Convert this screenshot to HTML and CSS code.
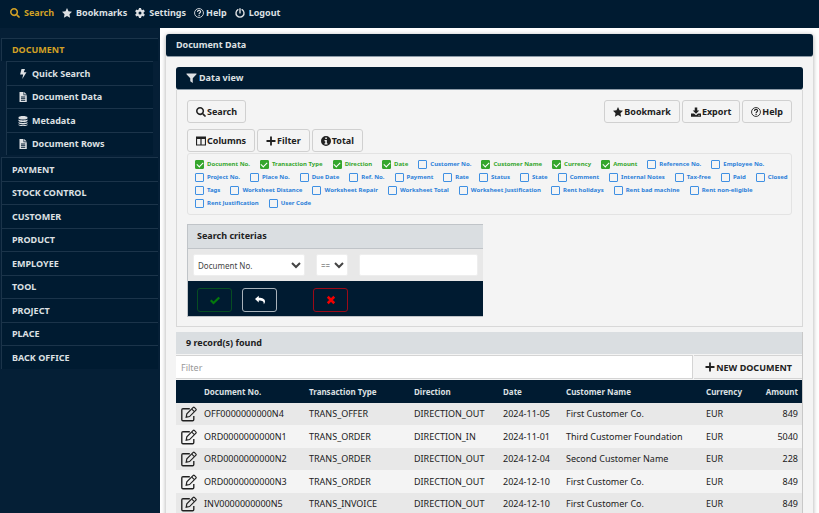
FILE: index.html
```html
<!DOCTYPE html>
<html lang="en">
<head>
    <meta charset="UTF-8">
    <meta name="viewport" content="width=device-width, initial-scale=1.0">
    <title>Document Data</title>
    <link rel="stylesheet" href="styles.css">
</head>
<body>
    <svg class="sprite" aria-hidden="true">
        <symbol id="search" viewBox="0 0 512 512"><path d="M505 442.7L405.3 343c-4.5-4.5-10.6-7-17-7H372c27.6-35.3 44-79.7 44-128C416 93.1 322.9 0 208 0S0 93.1 0 208s93.1 208 208 208c48.3 0 92.7-16.4 128-44v16.3c0 6.4 2.5 12.5 7 17l99.7 99.7c9.4 9.4 24.6 9.4 33.9 0l28.3-28.3c9.4-9.4 9.4-24.6.1-34zM208 336c-70.7 0-128-57.2-128-128s57.2-128 128-128 128 57.2 128 128-57.200 128-128 128z"/></symbol>
        <symbol id="star" viewBox="0 0 20 20"><path d="M10 0l3 6.500 7 .9-5.100 4.900 1.300 7.200L10 16l-6.200 3.500 1.300-7.200L0 7.400l7-.9z"/></symbol>
        <symbol id="cog" viewBox="0 0 20 20"><circle cx="10" cy="10" r="5.200" fill="none" stroke="currentColor" stroke-width="4.400"/><path d="M10 0v4M10 16v4M1.400 5l3.400 2M15.200 13l3.400 2M1.400 15l3.400-2M15.200 7l3.400-2" stroke="currentColor" stroke-width="4.400"/></symbol>
        <symbol id="help" viewBox="0 0 20 20"><circle cx="10" cy="10" r="8.900" fill="none" stroke="currentColor" stroke-width="1.800"/><path d="M7 8c0-4.200 6.200-4.200 6.200-.6 0 2.200-3 2.200-3 4.800" fill="none" stroke="currentColor" stroke-width="2.200"/><path d="M9 13.600h2.400V16H9z"/></symbol>
        <symbol id="power" viewBox="0 0 20 20"><path d="M5.800 3.400a8 8 0 1 0 8.400 0M10 1.400v8.400" fill="none" stroke="currentColor" stroke-width="2.800" stroke-linecap="round"/></symbol>
        <symbol id="bolt" viewBox="0 0 20 20"><path d="M7 0h7l-2.500 6.500H17L8.500 20l1.800-9H4.200z"/></symbol>
        <symbol id="file" viewBox="0 0 20 20"><path fill-rule="evenodd" d="M3 0h8v6.500h6.500V20H3zM12.300 0l5.200 5.200h-5.200zM6 9v1.800h8.500V9zm0 3.300v1.800h8.500v-1.800zm0 3.300v1.800h8.500v-1.800z"/></symbol>
        <symbol id="database" viewBox="0 0 20 20"><path d="M1 3c0-4 18-4 18 0v1.500c0 3.600-18 3.600-18 0zM1 7c3 2.400 15 2.400 18 0v2.500c0 3.400-18 3.400-18 0zM1 12c3 2.400 15 2.400 18 0v2.200c0 3.400-18 3.400-18 0zM1 16.600c3 2.400 15 2.400 18 0V18c0 3-18 3-18 0z"/></symbol>
        <symbol id="filter" viewBox="0 0 20 20"><path d="M0 1h20v1.500l-7.500 8V20l-5-3.500v-6L0 2.500z"/></symbol>
        <symbol id="columns" viewBox="0 0 20 20"><path fill-rule="evenodd" d="M0 1h20v18H0zM2.200 6v10.800h6.600V6zm9 0v10.800h6.600V6z"/></symbol>
        <symbol id="plus" viewBox="0 0 20 20"><path d="M8.200 1h3.600v7.200H19v3.600h-7.200V19H8.200v-7.200H1V8.200h7.200z"/></symbol>
        <symbol id="info" viewBox="0 0 20 20"><path fill-rule="evenodd" d="M10 0a10 10 0 1 0 0 20 10 10 0 0 0 0-20zM8.500 3h3.200v3H8.500zM7 8h4.700v6.500H13V17H7v-2.500h1.500v-4H7z"/></symbol>
        <symbol id="download" viewBox="0 0 20 20"><path fill-rule="evenodd" d="M7.500 1h5v6h4L10 13.500 3.500 7h4zM0 13h6l4 3.400 4-3.400h6v6.500H0zM15 16.200v1.300h2v-1.300z"/></symbol>
        <symbol id="edit" viewBox="0 0 20 20"><path d="M11 3.500H2.500q-1.500 0-1.500 1.500v12q0 1.500 1.500 1.500h12q1.500 0 1.500-1.500v-4.500" fill="none" stroke="currentColor" stroke-width="1.700"/><path d="M6.500 14l.8-4.200 8-8q.7-.6 1.400 0l2 2q.6.700 0 1.400l-8 8z" fill="none" stroke="currentColor" stroke-width="1.500"/><path d="M13.500 3.800l3.200 3.200" stroke="currentColor" stroke-width="1.300"/></symbol>
        <symbol id="check" viewBox="0 0 20 20"><path d="M1.500 10.500l5.500 5.500L18.500 5" fill="none" stroke="currentColor" stroke-width="4.400"/></symbol>
        <symbol id="reply" viewBox="0 0 20 20"><path d="M0 8l7.500-6.500V5.500C15 5.500 20 8 20 13q0 3-2.500 5.500c.5-5.500-2.500-7.500-10-7.500v4z"/></symbol>
        <symbol id="times" viewBox="0 0 20 20"><path d="M3.500 3.500l13 13M16.500 3.500l-13 13" stroke="currentColor" stroke-width="5"/></symbol>
    </svg>

    <header class="menubar">
        <a href="#" class="active"><svg class="icon"><use href="#search"/></svg>Search</a>
        <a href="#"><svg class="icon"><use href="#star"/></svg>Bookmarks</a>
        <a href="#"><svg class="icon"><use href="#cog"/></svg>Settings</a>
        <a href="#" class="tight"><svg class="icon"><use href="#help"/></svg>Help</a>
        <a href="#"><svg class="icon"><use href="#power"/></svg>Logout</a>
    </header>

    <div class="page">
        <nav class="sidebar">
            <a href="#" class="group active">DOCUMENT</a>
            <div class="submenu">
                <a href="#"><svg class="icon"><use href="#bolt"/></svg>Quick Search</a>
                <a href="#"><svg class="icon"><use href="#file"/></svg>Document Data</a>
                <a href="#"><svg class="icon"><use href="#database"/></svg>Metadata</a>
                <a href="#"><svg class="icon"><use href="#file"/></svg>Document Rows</a>
            </div>
            <a href="#" class="group">PAYMENT</a>
            <a href="#" class="group">STOCK CONTROL</a>
            <a href="#" class="group">CUSTOMER</a>
            <a href="#" class="group">PRODUCT</a>
            <a href="#" class="group">EMPLOYEE</a>
            <a href="#" class="group">TOOL</a>
            <a href="#" class="group">PROJECT</a>
            <a href="#" class="group">PLACE</a>
            <a href="#" class="group">BACK OFFICE</a>
        </nav>

        <main class="content">
            <section class="panel">
                <h1 class="title">Document Data</h1>
                <div class="panel-body">
                    <h2 class="title"><svg class="icon"><use href="#filter"/></svg>Data view</h2>
                    <div class="view">
                        <div class="toolbar">
                            <button type="button" class="btn"><svg class="icon"><use href="#search"/></svg>Search</button>
                            <span class="spacer"></span>
                            <button type="button" class="btn"><svg class="icon"><use href="#star"/></svg>Bookmark</button>
                            <button type="button" class="btn"><svg class="icon"><use href="#download"/></svg>Export</button>
                            <button type="button" class="btn"><svg class="icon"><use href="#help"/></svg>Help</button>
                        </div>
                        <div class="toolbar">
                            <button type="button" class="btn"><svg class="icon"><use href="#columns"/></svg>Columns</button>
                            <button type="button" class="btn"><svg class="icon"><use href="#plus"/></svg>Filter</button>
                            <button type="button" class="btn"><svg class="icon"><use href="#info"/></svg>Total</button>
                        </div>
                        <div class="columns">
                            <label><input type="checkbox" checked>Document No.</label>
                            <label><input type="checkbox" checked>Transaction Type</label>
                            <label><input type="checkbox" checked>Direction</label>
                            <label><input type="checkbox" checked>Date</label>
                            <label><input type="checkbox">Customer No.</label>
                            <label><input type="checkbox" checked>Customer Name</label>
                            <label><input type="checkbox" checked>Currency</label>
                            <label><input type="checkbox" checked>Amount</label>
                            <label><input type="checkbox">Reference No.</label>
                            <label><input type="checkbox">Employee No.</label>
                            <label><input type="checkbox">Project No.</label>
                            <label><input type="checkbox">Place No.</label>
                            <label><input type="checkbox">Due Date</label>
                            <label><input type="checkbox">Ref. No.</label>
                            <label><input type="checkbox">Payment</label>
                            <label><input type="checkbox">Rate</label>
                            <label><input type="checkbox">Status</label>
                            <label><input type="checkbox">State</label>
                            <label><input type="checkbox">Comment</label>
                            <label><input type="checkbox">Internal Notes</label>
                            <label><input type="checkbox">Tax-free</label>
                            <label><input type="checkbox">Paid</label>
                            <label><input type="checkbox">Closed</label>
                            <label><input type="checkbox">Tags</label>
                            <label><input type="checkbox">Worksheet Distance</label>
                            <label><input type="checkbox">Worksheet Repair</label>
                            <label><input type="checkbox">Worksheet Total</label>
                            <label><input type="checkbox">Worksheet Justification</label>
                            <label><input type="checkbox">Rent holidays</label>
                            <label><input type="checkbox">Rent bad machine</label>
                            <label><input type="checkbox">Rent non-eligible</label>
                            <label><input type="checkbox">Rent Justification</label>
                            <label><input type="checkbox">User Code</label>
                        </div>
                        <form class="criteria">
                            <h3>Search criterias</h3>
                            <div class="criteria-fields">
                                <select class="field-name" aria-label="Field">
                                    <option>Document No.</option>
                                    <option>Transaction Type</option>
                                </select>
                                <select class="field-op" aria-label="Operator">
                                    <option>==</option>
                                    <option>!=</option>
                                </select>
                                <input type="text" class="field-value" aria-label="Value">
                            </div>
                            <div class="criteria-actions">
                                <button type="button" class="ok" aria-label="Apply"><svg class="icon"><use href="#check"/></svg></button>
                                <button type="button" class="back" aria-label="Back"><svg class="icon"><use href="#reply"/></svg></button>
                                <button type="button" class="delete" aria-label="Delete"><svg class="icon"><use href="#times"/></svg></button>
                            </div>
                        </form>
                    </div>

                    <div class="result">
                        <h3>9 record(s) found</h3>
                        <div class="result-filter">
                            <input type="text" placeholder="Filter" aria-label="Filter">
                            <button type="button"><svg class="icon"><use href="#plus"/></svg>NEW DOCUMENT</button>
                        </div>
                        <table>
                            <thead>
                                <tr>
                                    <th class="col-edit"></th>
                                    <th class="col-doc">Document No.</th>
                                    <th class="col-type">Transaction Type</th>
                                    <th class="col-dir">Direction</th>
                                    <th class="col-date">Date</th>
                                    <th>Customer Name</th>
                                    <th class="col-curr">Currency</th>
                                    <th class="col-amount">Amount</th>
                                </tr>
                            </thead>
                            <tbody>
                                <tr>
                                    <td><svg class="icon"><use href="#edit"/></svg></td>
                                    <td>OFF0000000000N4</td>
                                    <td>TRANS_OFFER</td>
                                    <td>DIRECTION_OUT</td>
                                    <td>2024-11-05</td>
                                    <td>First Customer Co.</td>
                                    <td>EUR</td>
                                    <td class="col-amount">849</td>
                                </tr>
                                <tr>
                                    <td><svg class="icon"><use href="#edit"/></svg></td>
                                    <td>ORD0000000000N1</td>
                                    <td>TRANS_ORDER</td>
                                    <td>DIRECTION_IN</td>
                                    <td>2024-11-01</td>
                                    <td>Third Customer Foundation</td>
                                    <td>EUR</td>
                                    <td class="col-amount">5040</td>
                                </tr>
                                <tr>
                                    <td><svg class="icon"><use href="#edit"/></svg></td>
                                    <td>ORD0000000000N2</td>
                                    <td>TRANS_ORDER</td>
                                    <td>DIRECTION_OUT</td>
                                    <td>2024-12-04</td>
                                    <td>Second Customer Name</td>
                                    <td>EUR</td>
                                    <td class="col-amount">228</td>
                                </tr>
                                <tr>
                                    <td><svg class="icon"><use href="#edit"/></svg></td>
                                    <td>ORD0000000000N3</td>
                                    <td>TRANS_ORDER</td>
                                    <td>DIRECTION_OUT</td>
                                    <td>2024-12-10</td>
                                    <td>First Customer Co.</td>
                                    <td>EUR</td>
                                    <td class="col-amount">849</td>
                                </tr>
                                <tr>
                                    <td><svg class="icon"><use href="#edit"/></svg></td>
                                    <td>INV0000000000N5</td>
                                    <td>TRANS_INVOICE</td>
                                    <td>DIRECTION_OUT</td>
                                    <td>2024-12-10</td>
                                    <td>First Customer Co.</td>
                                    <td>EUR</td>
                                    <td class="col-amount">849</td>
                                </tr>
                            </tbody>
                        </table>
                    </div>
                </div>
            </section>
        </main>
    </div>
</body>
</html>
```

FILE: styles.css
```css
* {
    box-sizing: border-box;
}
body {
    margin: 0;
    height: 100vh;
    display: flex;
    flex-direction: column;
    overflow: hidden;
    font-family: "Noto Sans", sans-serif;
    font-size: 9px;
    line-height: 14px;
    color: #212121;
    background-color: #fff;
}
a {
    color: #dde0e3;
    text-decoration: none;
}
a.active {
    color: #d2a125;
}
h1, h2, h3 {
    margin: 0;
    font-size: 9px;
}
button, input, select {
    font-family: inherit;
    font-size: 9px;
    color: inherit;
}
button {
    cursor: pointer;
}
.sprite {
    position: absolute;
    width: 0;
    height: 0;
}
.icon {
    width: 10px;
    height: 10px;
    flex: none;
    fill: currentColor;
}

/* top menu */
.menubar {
    display: flex;
    align-items: center;
    gap: 8px;
    height: 28px;
    flex: none;
    padding: 0 10px 2px;
    background-color: #001b31;
    font-weight: bold;
}
.menubar a {
    display: flex;
    align-items: center;
    gap: 4px;
}
.menubar a.tight {
    gap: 2px;
}

.page {
    display: flex;
    flex: 1;
    min-height: 0;
}

/* side menu */
.sidebar {
    width: 160px;
    flex: none;
    padding: 10px 2px 0 1px;
    background-color: #051f36;
    font-weight: bold;
}
.sidebar a {
    display: flex;
    align-items: center;
    height: 23px;
    border: 1px solid #1b344a;
    border-width: 1px 0 0 1px;
    background-color: #001b31;
}
.sidebar .group {
    padding-left: 10px;
}
.sidebar .group:nth-of-type(even) {
    height: 24px;
}
.submenu {
    padding: 0 5px 2px;
}
.submenu a {
    gap: 4px;
    padding-left: 11px;
}
.submenu a:nth-child(odd) {
    height: 24px;
}

/* content */
.content {
    flex: 1;
    min-width: 0;
    padding: 6px 6px 0;
}
.panel {
    min-height: 100%;
    background-color: #f4f4f4;
    border-radius: 3px;
    box-shadow: 0 1px 5px rgba(0, 0, 0, 0.35);
}
.title {
    display: flex;
    align-items: center;
    gap: 2px;
    height: 23px;
    padding: 0 10px;
    border-bottom: 1px solid #8c9aa6;
    border-radius: 3px;
    background-color: #001b31;
    color: #dde0e3;
}
.title .icon {
    width: 11px;
}
.panel-body {
    padding: 10px;
}
.view {
    padding: 10px 10px 9px;
    border: 1px solid #d8d8d8;
    border-top: 0;
}
.toolbar {
    display: flex;
    gap: 2px;
    margin-bottom: 6px;
}
.spacer {
    flex: 1;
}
.btn {
    display: flex;
    align-items: center;
    gap: 1px;
    height: 23px;
    padding: 0 8px;
    border: 1px solid #d0d0d0;
    border-radius: 3px;
    background-color: #f4f4f4;
    font-weight: bold;
}
.columns {
    display: flex;
    flex-wrap: wrap;
    column-gap: 10px;
    margin-top: -5px;
    padding: 4px 0 4px 7px;
    border: 1px solid #e3e3e3;
    border-radius: 3px;
    font-size: 6px;
    font-weight: bold;
    line-height: 13px;
    color: #2b80d9;
}
.columns label {
    display: flex;
    align-items: center;
    gap: 3px;
}
.columns label:has(:checked) {
    color: #35a62d;
}
.columns input {
    appearance: none;
    display: flex;
    justify-content: center;
    width: 9px;
    height: 9px;
    margin: 0;
    border: 1px solid #3f90e3;
    border-radius: 1px;
}
.columns input:checked {
    border-color: #35a62d;
    background-color: #35a62d;
}
.columns input:checked::before {
    content: "";
    width: 3px;
    height: 5px;
    border: solid #fff;
    border-width: 0 1px 1px 0;
    transform: rotate(45deg);
}

/* search criteria */
.criteria {
    width: 296px;
    margin-top: 9px;
    border: 1px solid #c0c4c8;
    border-right: 0;
    background-color: #e8e8e8;
}
.criteria h3 {
    padding: 4px 9px 5px;
    border-bottom: 1px solid #c0c4c8;
    background-color: #dadee1;
}
.criteria-fields {
    display: flex;
    gap: 11px;
    padding: 5px;
}
.criteria-fields select,
.criteria-fields input {
    height: 22px;
    min-width: 0;
    border: 1px solid #eee;
    border-radius: 2px;
    background-color: #fff;
}
.criteria-fields select {
    font-size: 8px;
    color: #444;
}
.field-name {
    width: 112px;
}
.field-op {
    width: 32px;
}
.field-value {
    flex: 1;
}
.criteria-actions {
    display: flex;
    gap: 10px;
    padding: 7px 9px 4px;
    background-color: #001b31;
}
.criteria-actions button {
    display: flex;
    align-items: center;
    justify-content: center;
    width: 35px;
    height: 24px;
    padding: 0;
    border: 1px solid;
    border-radius: 3px;
    background-color: transparent;
}
.criteria-actions .ok {
    border-color: #064d22;
    color: #047a0c;
}
.criteria-actions .back {
    border-color: #a9b3bb;
    color: #fff;
}
.criteria-actions .delete {
    margin-left: 26px;
    border-color: #9c0a17;
    color: #f20000;
}

/* result */
.result {
    margin-top: 5px;
    border-right: 1px solid #c8c8c8;
}
.result h3 {
    padding: 4px 10px;
    background-color: #dadee1;
}
.result-filter {
    display: flex;
    gap: 1px;
    margin: 1px 0;
}
.result-filter input {
    flex: 1;
    min-width: 0;
    height: 24px;
    padding: 0 5px;
    border: 1px solid #d4d4d4;
    border-left: 0;
    background-color: #fff;
}
.result-filter input::placeholder {
    color: #999;
}
.result-filter button {
    display: flex;
    align-items: center;
    gap: 1px;
    padding: 0 10px 0 11px;
    border: 1px solid #d4d4d4;
    border-width: 1px 0;
    background-color: #f4f4f4;
    font-weight: bold;
}
table {
    width: 100%;
    table-layout: fixed;
    border-collapse: collapse;
}
th, td {
    height: 22px;
    padding: 0 5px;
    text-align: left;
    white-space: nowrap;
}
th {
    height: 23px;
    background-color: #001b31;
    color: #dde0e3;
    font-size: 8px;
}
tbody tr:nth-child(odd) {
    background-color: #e8e8e8;
}
tbody tr:nth-child(even) td {
    height: 23px;
}
td .icon {
    display: block;
    width: 16px;
    height: 16px;
}
.col-edit {
    width: 23px;
}
.col-doc, .col-type {
    width: 105px;
}
.col-dir {
    width: 89px;
}
.col-date {
    width: 63px;
}
.col-curr {
    width: 51px;
}
.col-amount {
    width: 50px;
    padding-right: 4px;
    text-align: right;
}
```
